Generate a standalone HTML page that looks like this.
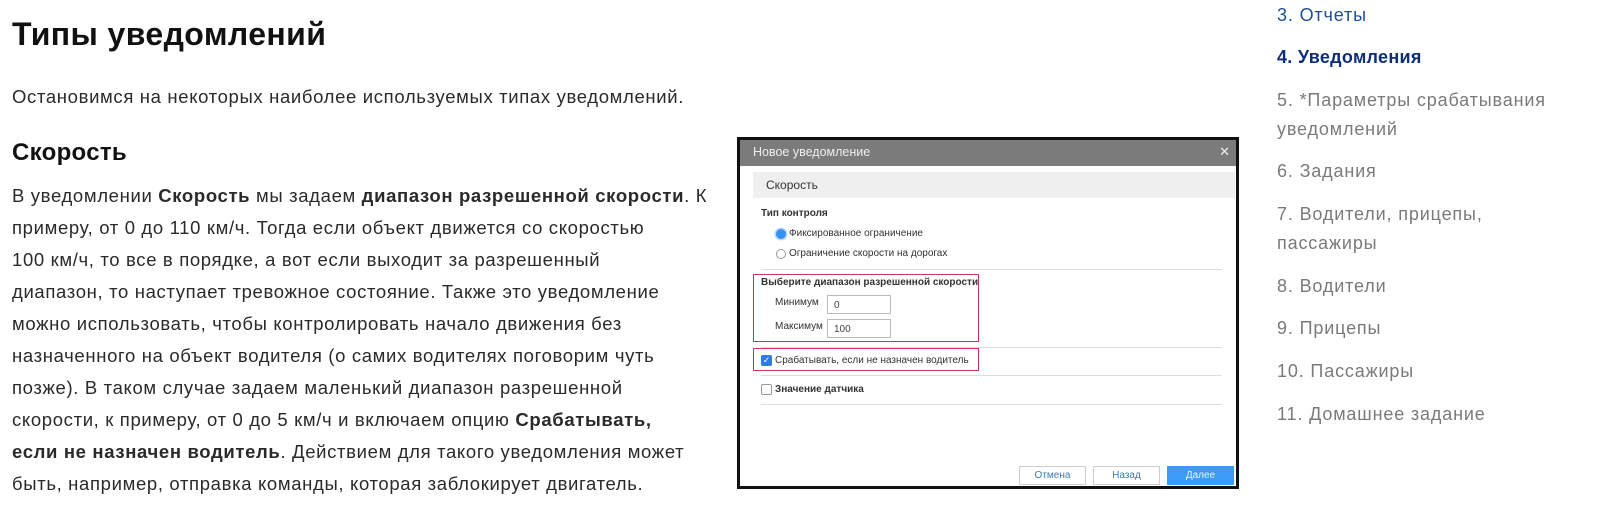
<!DOCTYPE html>
<html><head><meta charset="utf-8"><style>
*{margin:0;padding:0;box-sizing:border-box}
body{width:1600px;height:514px;background:#fff;position:relative;overflow:hidden;font-family:"Liberation Sans",sans-serif;color:#222}
.a{position:absolute;white-space:nowrap}
.t{font-size:18.5px;letter-spacing:0.65px;color:#2a2a2a;line-height:20px}
.nav{font-size:18px;letter-spacing:0.85px;color:#7a7a7a;line-height:20px;left:1277px}
.d{position:absolute;left:737px;top:137px;width:502px;height:352px;border:3px solid #111;background:#fff}
.s{font-size:10px;color:#333;line-height:12px}
.hr{position:absolute;height:1px;background:#ddd;left:21px;right:14px}
.red{position:absolute;border:1.5px solid #d2325a}
.inp{position:absolute;width:64px;height:19px;border:1px solid #bbb;font-size:10px;padding:4px 6px;color:#444}
.btn{position:absolute;top:326px;width:67px;height:19px;border:1px solid #ccc;font-size:10px;color:#3a7ab8;text-align:center;line-height:17px}
</style></head><body>
<div class="a" style="left:12px;top:16px;font-size:32px;font-weight:bold;color:#111;letter-spacing:0.4px">Типы уведомлений</div>
<div class="a t" style="left:12px;top:87px">Остановимся на некоторых наиболее используемых типах уведомлений.</div>
<div class="a" style="left:12px;top:139px;font-size:24px;font-weight:bold;color:#111;letter-spacing:0.3px">Скорость</div>
<div class="a t" style="left:12px;top:186px">В уведомлении <b>Скорость</b> мы задаем <b>диапазон разрешенной скорости</b>. К</div>
<div class="a t" style="left:12px;top:218px">примеру, от 0 до 110 км/ч. Тогда если объект движется со скоростью</div>
<div class="a t" style="left:12px;top:250px">100 км/ч, то все в порядке, а вот если выходит за разрешенный</div>
<div class="a t" style="left:12px;top:282px">диапазон, то наступает тревожное состояние. Также это уведомление</div>
<div class="a t" style="left:12px;top:314px">можно использовать, чтобы контролировать начало движения без</div>
<div class="a t" style="left:12px;top:346px">назначенного на объект водителя (о самих водителях поговорим чуть</div>
<div class="a t" style="left:12px;top:378px">позже). В таком случае задаем маленький диапазон разрешенной</div>
<div class="a t" style="left:12px;top:410px">скорости, к примеру, от 0 до 5 км/ч и включаем опцию <b>Срабатывать,</b></div>
<div class="a t" style="left:12px;top:442px"><b>если не назначен водитель</b>. Действием для такого уведомления может</div>
<div class="a t" style="left:12px;top:474px">быть, например, отправка команды, которая заблокирует двигатель.</div>

<div class="a nav" style="top:5px;color:#1f4f94">3. Отчеты</div>
<div class="a nav" style="top:47px;color:#0d2f7a;font-weight:bold;letter-spacing:0.3px">4. Уведомления</div>
<div class="a nav" style="top:90px">5. *Параметры срабатывания</div>
<div class="a nav" style="top:119px">уведомлений</div>
<div class="a nav" style="top:161px">6. Задания</div>
<div class="a nav" style="top:204px">7. Водители, прицепы,</div>
<div class="a nav" style="top:233px">пассажиры</div>
<div class="a nav" style="top:276px">8. Водители</div>
<div class="a nav" style="top:318px">9. Прицепы</div>
<div class="a nav" style="top:361px">10. Пассажиры</div>
<div class="a nav" style="top:404px">11. Домашнее задание</div>

<div class="d">
 <div style="position:absolute;left:0;top:0;right:0;height:26px;background:#7b7b7b;color:#eee;font-size:12.5px;padding:5px 0 0 13px">Новое уведомление<span style="position:absolute;right:6px;top:4px;font-size:13px">✕</span></div>
 <div style="position:absolute;left:13px;top:32px;right:1px;height:26px;background:#efefef;font-size:12px;color:#333;padding:6px 0 0 13px">Скорость</div>
 <div class="a s" style="left:21px;top:68px;font-weight:bold">Тип контроля</div>
 <div class="a" style="left:36px;top:89px;width:10px;height:10px;border-radius:50%;background:#3b8ff0;box-shadow:0 0 0 1.5px #bcd8fa"></div>
 <div class="a s" style="left:49px;top:88px">Фиксированное ограничение</div>
 <div class="a" style="left:36px;top:109px;width:10px;height:10px;border-radius:50%;border:1px solid #999"></div>
 <div class="a s" style="left:49px;top:108px">Ограничение скорости на дорогах</div>
 <div class="hr" style="top:129px"></div>
 <div class="red" style="left:13px;top:134px;width:226px;height:68px"></div>
 <div class="a s" style="left:21px;top:137px;font-weight:bold">Выберите диапазон разрешенной скорости</div>
 <div class="a s" style="left:35px;top:157px">Минимум</div>
 <div class="inp" style="left:87px;top:155px">0</div>
 <div class="a s" style="left:35px;top:181px">Максимум</div>
 <div class="inp" style="left:87px;top:179px">100</div>
 <div class="hr" style="top:207px"></div>
 <div class="red" style="left:13px;top:208px;width:226px;height:23px"></div>
 <div class="a" style="left:21px;top:215px;width:11px;height:11px;border-radius:2px;background:#2b7de0;color:#fff;font-size:9px;line-height:11px;text-align:center">✓</div>
 <div class="a s" style="left:35px;top:215px">Срабатывать, если не назначен водитель</div>
 <div class="hr" style="top:235px"></div>
 <div class="a" style="left:21px;top:244px;width:11px;height:11px;border-radius:2px;border:1px solid #999"></div>
 <div class="a s" style="left:35px;top:244px;font-weight:bold">Значение датчика</div>
 <div class="hr" style="top:264px"></div>
 <div class="btn" style="left:279px">Отмена</div>
 <div class="btn" style="left:353px">Назад</div>
 <div class="btn" style="left:427px;background:#3d9bf5;border-color:#3d9bf5;color:#eaf4ff">Далее</div>
</div>
</body></html>
